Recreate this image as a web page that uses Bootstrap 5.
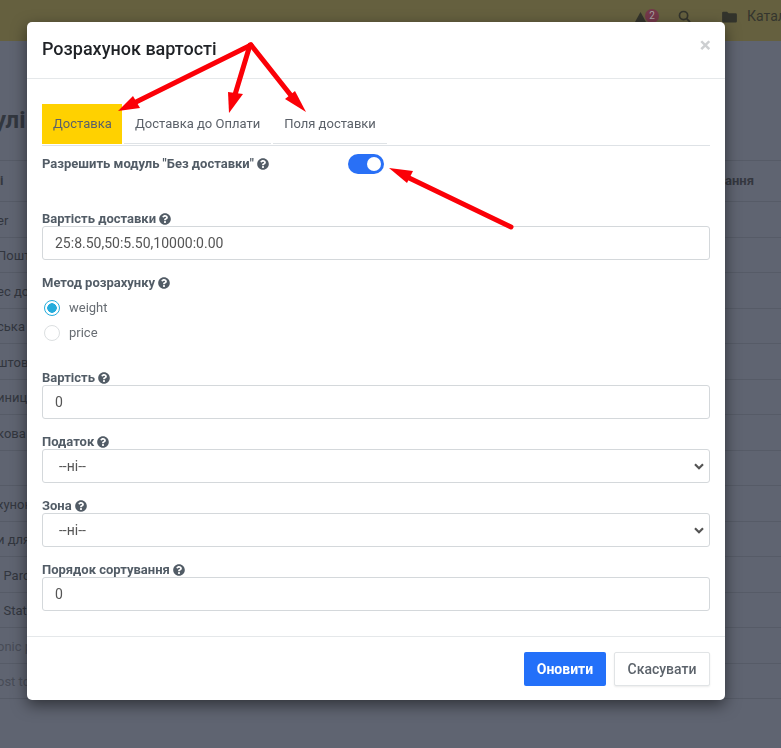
<!DOCTYPE html>
<html lang="uk">
<head>
<meta charset="utf-8">
<title>Розрахунок вартості</title>
<link href="https://cdn.jsdelivr.net/npm/bootstrap@5.3.0/dist/css/bootstrap.min.css" rel="stylesheet">
<style>
html, body { height: 100%; overflow: hidden; }
body { font-family: Roboto, "Noto Sans", sans-serif; background: #5f6471; color: #32363f; font-size: 13px; }
.top-strip { height: 41px; background: #65603f; color: #33342c; padding-bottom: 8px; }
.alert-tool { position: relative; width: 28px; height: 16px; margin-right: 16px; }
.alert-tool svg { position: absolute; left: 0; top: 2px; }
.alert-count { position: absolute; left: 11px; top: 0; width: 14px; height: 14px; border-radius: 50%; background: #74384a; color: #a9a3a8; font-size: 10px; line-height: 14px; text-align: center; }
.search-tool { margin-right: 31px; }
.folder-tool { margin-right: 10px; }
.cat-text { font-size: 14px; width: 34px; overflow: hidden; white-space: nowrap; color: #34352e; }
.page-name { font-size: 24px; font-weight: 700; line-height: 1; padding-top: 67px; height: 119px; margin-left: -6px; color: #32373f; white-space: nowrap; }
.bg-head { height: 42px; border-top: 1px solid #565b67; border-bottom: 1px solid #565b67; font-weight: 700; color: #34373f; }
.bg-row { height: 35.5px; padding-top: 2px; border-bottom: 1px solid #565b67; color: #32363e; white-space: nowrap; }
.row-word { margin-left: -3px; }
.bg-row.is-faint { color: #484c57; }
.tail-text { padding-right: 27px; }
.calc-dialog { max-width: 698px; width: 698px; margin: 22px 0 0 27px; }
.calc-content { height: 678px; border: 0; border-radius: 5px; box-shadow: 0 5px 15px rgba(0,0,0,.5); }
.calc-head { height: 57px; flex: none; padding: 0 15px; border-bottom: 1px solid #e5e8ea; }
.calc-title { font-size: 18px; font-weight: 500; color: #1f2226; margin: 0 0 2px; }
.calc-close { font-size: 21px; font-weight: 700; color: #cdcfd1; line-height: 1; margin: 0 -1px 9px 0; }
.calc-body { padding: 25px 15px 0; flex: none; }
.tab-line { height: 42px; border-bottom: 1px solid #dee2e6; gap: 2px; }
.tab-item { height: 40px; padding: 0 11px; color: #5b6169; font-size: 13px; line-height: 40px; border-bottom: 1px solid #dfe3e6; white-space: nowrap; }
.tab-item.is-on { background: #ffd100; border-bottom-color: #ffd100; width: 80px; }
.fld-label { font-size: 13px; font-weight: 700; color: #525c66; line-height: 14px; margin: 0; display: block; white-space: nowrap; }
.fld-label svg { width: 12px; height: 12px; vertical-align: -1.500px; }
.row-switch { height: 66px; padding-top: 11px; }
.switch-box { width: 36px; height: 20px; margin-top: -3px; background-color: #2970f6; border-radius: 10px; position: relative; flex: none; }
.switch-box::after { content: ""; position: absolute; right: 3px; top: 3px; width: 14px; height: 14px; border-radius: 50%; background: #fff; }
.switch-slot { width: 306px; flex: none; }
.calc-input.form-control, .calc-input.form-select { height: 34px; min-height: 0; border: 1px solid #d4d8db; border-radius: 3px; font-size: 14px; color: #555; padding: 0 12px; box-shadow: none; }
.calc-input.form-select { padding-left: 16px; background-image: url("data:image/svg+xml,%3csvg xmlns='http://www.w3.org/2000/svg' viewBox='0 0 10 7'%3e%3cpath fill='none' stroke='%23555' stroke-width='2.200' d='M1 1.200 5 5.200 9 1.200'/%3e%3c/svg%3e"); background-position: right 5px center; background-size: 10px 7px; }
.fld-gap { margin-bottom: 16px; }
.radio-group { margin-top: 5px; }
.radio-row { display: flex; align-items: center; height: 25px; color: #686d73; padding-left: 2px; font-size: 13px; }
.radio-dot { appearance: none; width: 16px; height: 16px; border-radius: 50%; border: 1px solid #dcdfe1; background: #fff; margin: 0 9px 0 0; flex: none; }
.radio-dot:checked { border-color: #25acdc; background: radial-gradient(circle, #25acdc 0 4.500px, #fff 5px); }
.method-block { height: 95px; }
.calc-foot { height: 64px; flex: none; margin-top: 25px; padding: 15px; border-top: 1px solid #e5e8ea; gap: 8px; }
.btn-renew.btn { width: 82px; height: 34px; padding: 0; background: #2370f9; border: 0; border-radius: 2px; font-weight: 700; font-size: 14px; color: #fff; }
.btn-drop.btn { width: 96px; height: 34px; padding: 0; background: #fff; border: 1px solid #e1e4e6; border-radius: 2px; font-weight: 500; font-size: 14px; color: #5c636b; box-shadow: 0 1px 2px rgba(0,0,0,.08); }
.arrow-layer { position: absolute; left: 0; top: 0; z-index: 1060; pointer-events: none; }
</style>
</head>
<body>
<svg width="0" height="0" class="position-absolute">
  <symbol id="qmark" viewBox="0 0 512 512"><path fill="#525c66" d="M504 256c0 136.997-111.043 248-248 248S8 392.997 8 256C8 119.083 119.043 8 256 8s248 111.083 248 248zM262.655 90c-54.497 0-89.255 22.957-116.549 63.758-3.536 5.286-2.353 12.415 2.715 16.258l34.699 26.31c5.205 3.947 12.621 3.008 16.665-2.122 17.864-22.658 30.113-35.797 57.303-35.797 20.429 0 45.698 13.148 45.698 32.958 0 14.976-12.363 22.667-32.534 33.976C247.128 238.528 216 254.941 216 296v4c0 6.627 5.373 12 12 12h56c6.627 0 12-5.373 12-12v-1.333c0-28.462 83.186-29.647 83.186-106.667 0-58.002-60.165-102-116.531-102zM256 338c-25.365 0-46 20.635-46 46 0 25.364 20.635 46 46 46s46-20.636 46-46c0-25.365-20.635-46-46-46z"/></symbol>
</svg>

<div class="top-strip d-flex align-items-center justify-content-end">
  <div class="alert-tool">
    <svg width="13" height="13" viewBox="0 0 14 14"><path fill="#33342c" d="M7 1 13.500 13H.5z"/></svg>
    <span class="alert-count">2</span>
  </div>
  <svg class="search-tool" width="13" height="13" viewBox="0 0 14 14" fill="none" stroke="#33342c" stroke-width="1.800"><circle cx="6" cy="6" r="4.400"/><path d="m9.300 9.300 3.700 3.700"/></svg>
  <svg class="folder-tool" width="15" height="12" viewBox="0 0 16 13"><path fill="#33342c" d="M0 2a1.300 1.300 0 0 1 1.300-1.300h4L7 2.400h7.700A1.300 1.300 0 0 1 16 3.700v7.500a1.300 1.300 0 0 1-1.300 1.300H1.300A1.300 1.300 0 0 1 0 11.200z"/></svg>
  <span class="cat-text">Каталог</span>
</div>
<div class="page-name">улі</div>
<div class="bg-head d-flex align-items-center justify-content-between"><span>і</span><span class="tail-text">ання</span></div>
<div class="bg-row d-flex align-items-center"><span class="row-word">er</span></div>
<div class="bg-row d-flex align-items-center"><span class="row-word">Пошт</span></div>
<div class="bg-row d-flex align-items-center"><span class="row-word">ес до</span></div>
<div class="bg-row d-flex align-items-center"><span class="row-word">ська</span></div>
<div class="bg-row d-flex align-items-center"><span class="row-word">штов</span></div>
<div class="bg-row d-flex align-items-center"><span class="row-word">иниц</span></div>
<div class="bg-row d-flex align-items-center"><span class="row-word">кова</span></div>
<div class="bg-row d-flex align-items-center"></div>
<div class="bg-row d-flex align-items-center"><span class="row-word">хунок</span></div>
<div class="bg-row d-flex align-items-center"><span class="row-word">и для</span></div>
<div class="bg-row d-flex align-items-center"><span class="row-word">&nbsp;&nbsp;Parcel</span></div>
<div class="bg-row d-flex align-items-center"><span class="row-word">&nbsp;&nbsp;Status</span></div>
<div class="bg-row d-flex align-items-center is-faint"><span class="row-word">onic p</span></div>
<div class="bg-row d-flex align-items-center is-faint"><span class="row-word">ost to</span></div>

<div class="modal d-block" tabindex="-1">
  <div class="modal-dialog calc-dialog">
    <div class="modal-content calc-content">
      <div class="calc-head d-flex align-items-center justify-content-between">
        <h5 class="calc-title">Розрахунок вартості</h5>
        <span class="calc-close">×</span>
      </div>
      <div class="calc-body">
        <div class="tab-line d-flex">
          <div class="tab-item is-on">Доставка</div>
          <div class="tab-item">Доставка до Оплати</div>
          <div class="tab-item">Поля доставки</div>
        </div>
        <div class="row-switch d-flex">
          <div class="switch-slot"><label class="fld-label">Разрешить модуль "Без доставки" <svg><use href="#qmark"/></svg></label></div>
          <div class="switch-box"></div>
        </div>
        <div class="fld-gap">
          <label class="fld-label">Вартість доставки <svg><use href="#qmark"/></svg></label>
          <input class="form-control calc-input" value="25:8.50,50:5.50,10000:0.00">
        </div>
        <div class="method-block">
          <label class="fld-label">Метод розрахунку <svg><use href="#qmark"/></svg></label>
          <div class="radio-group">
            <label class="radio-row"><input type="radio" class="radio-dot" name="m" checked>weight</label>
            <label class="radio-row"><input type="radio" class="radio-dot" name="m">price</label>
          </div>
        </div>
        <div class="fld-gap">
          <label class="fld-label">Вартість <svg><use href="#qmark"/></svg></label>
          <input class="form-control calc-input" value="0">
        </div>
        <div class="fld-gap">
          <label class="fld-label">Податок <svg><use href="#qmark"/></svg></label>
          <select class="form-select calc-input"><option>--ні--</option></select>
        </div>
        <div class="fld-gap">
          <label class="fld-label">Зона <svg><use href="#qmark"/></svg></label>
          <select class="form-select calc-input"><option>--ні--</option></select>
        </div>
        <div>
          <label class="fld-label">Порядок сортування <svg><use href="#qmark"/></svg></label>
          <input class="form-control calc-input" value="0">
        </div>
      </div>
      <div class="calc-foot d-flex justify-content-end">
        <button class="btn btn-renew">Оновити</button>
        <button class="btn btn-drop">Скасувати</button>
      </div>
    </div>
  </div>
</div>

<svg class="arrow-layer" width="781" height="748" viewBox="0 0 781 748">
  <g stroke="#fb0007" stroke-width="5" stroke-linecap="round" fill="none">
    <path d="M251 45 132 104"/>
    <path d="M250 45 234 98"/>
    <path d="M251 45 293 98"/>
    <path d="M511 227 405 176"/>
  </g>
  <g fill="#fb0007">
    <path d="M118 111 133 96 140 108z"/>
    <path d="M229 113 228 92 243 94z"/>
    <path d="M306 112 295 91 285 99z"/>
    <path d="M389 168 413 171 407 183z"/>
  </g>
</svg>
<script src="https://cdn.jsdelivr.net/npm/bootstrap@5.3.0/dist/js/bootstrap.bundle.min.js"></script>
</body>
</html>
